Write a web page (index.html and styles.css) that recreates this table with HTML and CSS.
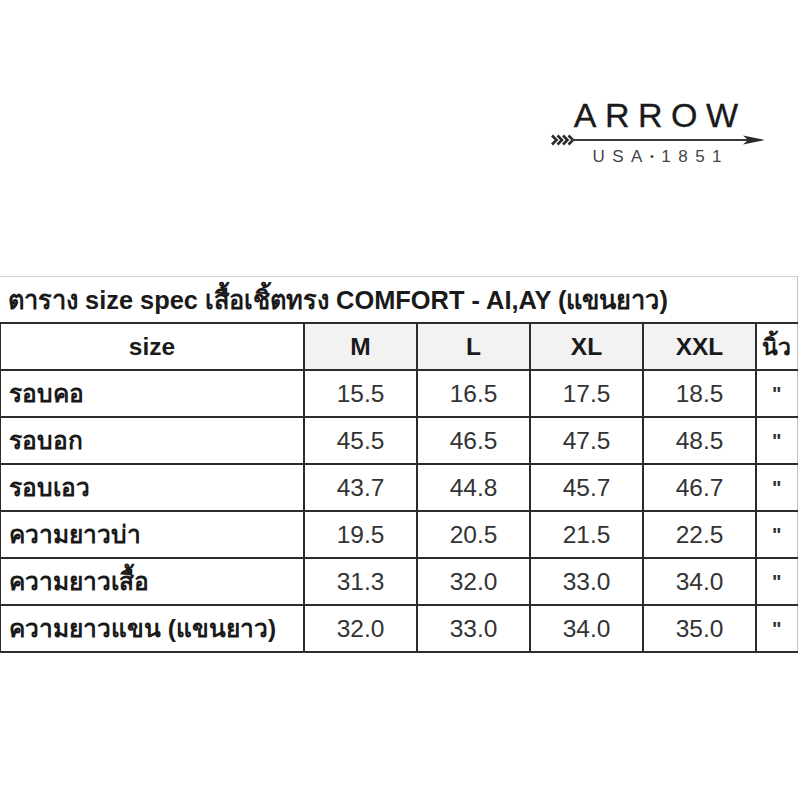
FILE: index.html
```html
<!DOCTYPE html>
<html lang="th">
<head>
<meta charset="utf-8">
<title>ARROW size spec</title>
<link rel="stylesheet" href="styles.css">
</head>
<body>
<div class="page">
  <header class="brand-wrap">
    <div class="brand">
      <div class="brand-name">ARROW</div>
      <svg class="brand-arrow" width="216" height="14" viewBox="0 0 216 14">
        <g fill="none" stroke="#2a2a2a" stroke-width="2.6" stroke-linejoin="miter">
          <path d="M2 2.5 L6.5 7 L2 11.5"/>
          <path d="M7.5 2.5 L12 7 L7.5 11.5"/>
          <path d="M13 2.5 L17.5 7 L13 11.5"/>
          <path d="M18.5 2.5 L23 7 L18.5 11.5"/>
        </g>
        <line x1="21" y1="7" x2="202" y2="7" stroke="#3a3a3a" stroke-width="1.8"/>
        <path d="M193 2.5 L215 7 L193 11.5 L198 7 Z" fill="#2a2a2a"/>
      </svg>
      <div class="brand-sub">USA<span class="dot">•</span>1851</div>
    </div>
  </header>
  <table class="spec">
    <colgroup>
      <col class="c-label">
      <col class="c-size"><col class="c-size"><col class="c-size"><col class="c-size">
      <col class="c-unit">
    </colgroup>
    <tr class="title-row">
      <td colspan="6" class="title">ตาราง size spec เสื้อเชิ้ตทรง COMFORT - AI,AY (แขนยาว)</td>
    </tr>
    <tr class="head-row">
      <td class="head-label">size</td>
      <td class="head-size">M</td>
      <td class="head-size">L</td>
      <td class="head-size">XL</td>
      <td class="head-size">XXL</td>
      <td class="head-unit">นิ้ว</td>
    </tr>
    <tr><td class="label">รอบคอ</td><td class="num">15.5</td><td class="num">16.5</td><td class="num">17.5</td><td class="num">18.5</td><td class="unit">"</td></tr>
    <tr><td class="label">รอบอก</td><td class="num">45.5</td><td class="num">46.5</td><td class="num">47.5</td><td class="num">48.5</td><td class="unit">"</td></tr>
    <tr><td class="label">รอบเอว</td><td class="num">43.7</td><td class="num">44.8</td><td class="num">45.7</td><td class="num">46.7</td><td class="unit">"</td></tr>
    <tr><td class="label">ความยาวบ่า</td><td class="num">19.5</td><td class="num">20.5</td><td class="num">21.5</td><td class="num">22.5</td><td class="unit">"</td></tr>
    <tr><td class="label">ความยาวเสื้อ</td><td class="num">31.3</td><td class="num">32.0</td><td class="num">33.0</td><td class="num">34.0</td><td class="unit">"</td></tr>
    <tr><td class="label">ความยาวแขน (แขนยาว)</td><td class="num">32.0</td><td class="num">33.0</td><td class="num">34.0</td><td class="num">35.0</td><td class="unit">"</td></tr>
  </table>
</div>
</body>
</html>
```
FILE: styles.css
```css
html, body {
  margin: 0;
  padding: 0;
  background: #ffffff;
}
body {
  font-family: "Liberation Sans", Arial, "Noto Sans", sans-serif;
  color: #222;
}
.page {
  width: 800px;
  height: 800px;
  overflow: hidden;
}
.brand-wrap {
  height: 276px;
  box-sizing: border-box;
  padding-top: 97px;
  padding-right: 34px;
  display: flex;
  justify-content: flex-end;
  align-items: flex-start;
}
.brand {
  display: flex;
  flex-direction: column;
  align-items: center;
  width: 216px;
}
.brand-name {
  font-size: 34px;
  line-height: 36px;
  letter-spacing: 8.5px;
  padding-left: 8.5px;
  color: #1a1a1a;
  margin-left: -4px;
  -webkit-text-stroke: 0.3px #1a1a1a;
}
.brand-arrow {
  display: block;
  margin-top: 0;
}
.brand-sub {
  font-size: 17px;
  line-height: 20px;
  letter-spacing: 7.5px;
  padding-left: 7.5px;
  color: #444;
  margin-top: 0;
  margin-left: -2px;
}
.brand-sub .dot {
  font-size: 11px;
  position: relative;
  top: -2px;
}
.spec {
  border-collapse: collapse;
  table-layout: fixed;
  width: 797px;
  margin-left: -1px;
}
.c-label { width: 304px; }
.c-size { width: 113px; }
.c-unit { width: 41px; }
.spec td {
  border: 2px solid #2c2c2c;
  height: 45px;
  padding: 0;
  font-size: 24.5px;
  line-height: 28px;
  white-space: nowrap;
  overflow: hidden;
}
.spec td:last-child {
  border-right: 1px solid #c4c4c4;
}
.title-row td.title {
  border-top: 1px solid #d0d0d0;
  border-left: none;
  border-right: 1px solid #c4c4c4;
  font-weight: bold;
  font-size: 25.4px;
  padding-left: 8px;
  color: #1a1a1a;
}
.head-label {
  text-align: center;
  font-weight: bold;
  color: #1a1a1a;
}
.head-size {
  text-align: center;
  font-weight: bold;
  background: #f2f2f2;
  color: #1a1a1a;
}
.head-unit {
  text-align: center;
  font-weight: bold;
  font-size: 23px !important;
  color: #1a1a1a;
}
.label {
  font-weight: bold;
  padding-left: 8px !important;
  color: #1a1a1a;
}
.num {
  text-align: center;
  color: #333;
}
.unit {
  text-align: center;
  font-weight: bold;
  color: #333;
  font-size: 20px !important;
  vertical-align: middle;
}
```
